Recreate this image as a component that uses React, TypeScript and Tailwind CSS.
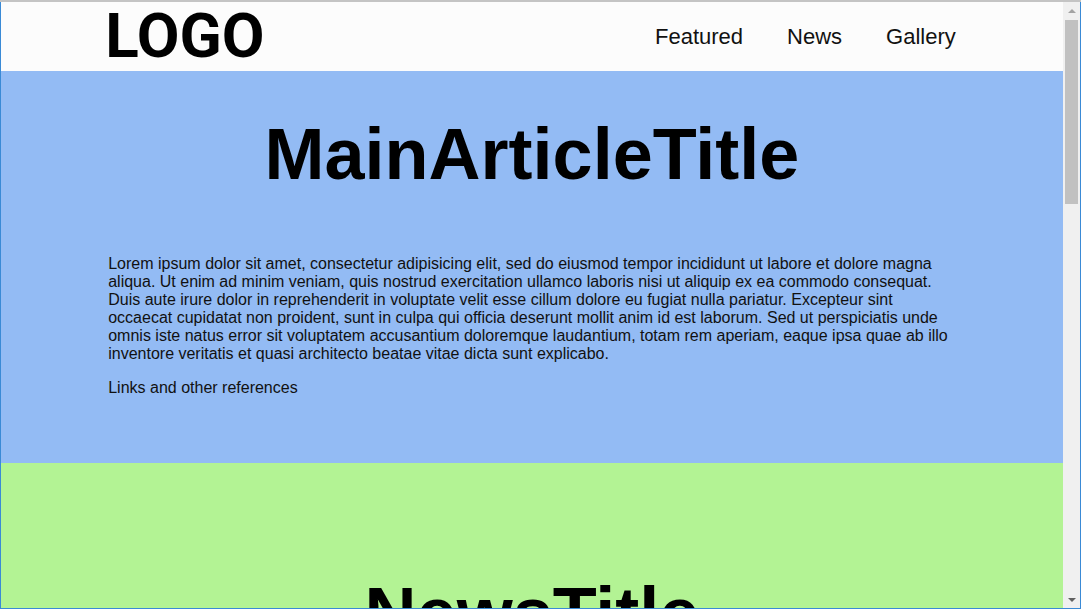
const lorem =
  "Lorem ipsum dolor sit amet, consectetur adipisicing elit, sed do eiusmod tempor incididunt ut labore et dolore magna aliqua. Ut enim ad minim veniam, quis nostrud exercitation ullamco laboris nisi ut aliquip ex ea commodo consequat. Duis aute irure dolor in reprehenderit in voluptate velit esse cillum dolore eu fugiat nulla pariatur. Excepteur sint occaecat cupidatat non proident, sunt in culpa qui officia deserunt mollit anim id est laborum. Sed ut perspiciatis unde omnis iste natus error sit voluptatem accusantium doloremque laudantium, totam rem aperiam, eaque ipsa quae ab illo inventore veritatis et quasi architecto beatae vitae dicta sunt explicabo.";

const navLinks = ["Featured", "News", "Gallery"];

function Scrollbar() {
  return (
    <div className="w-[17px] shrink-0 bg-[#f0f0f0] flex flex-col items-center">
      {/* up arrow */}
      <div className="h-[17px] w-full flex items-center justify-center">
        <div className="w-0 h-0 border-l-[4px] border-r-[4px] border-b-[4px] border-l-transparent border-r-transparent border-b-[#a3a3a3]" />
      </div>
      {/* thumb */}
      <div className="w-[13px] h-[184px] mt-[1px] bg-[#c1c1c1]" />
      <div className="flex-1" />
      {/* down arrow */}
      <div className="h-[17px] w-full flex items-center justify-center">
        <div className="w-0 h-0 border-l-[4px] border-r-[4px] border-t-[4px] border-l-transparent border-r-transparent border-t-[#606060]" />
      </div>
    </div>
  );
}

export default function App() {
  return (
    <div
      className="w-[1081px] h-[609px] flex flex-col overflow-hidden bg-white"
      style={{ fontFamily: "'Liberation Sans', Arial, sans-serif" }}
    >
      {/* window top edge */}
      <div className="h-[2px] shrink-0 bg-[#c4c4c4]" />

      <div className="flex-1 flex min-h-0">
        <div className="w-px shrink-0 bg-[#3a8ad6]" />

        {/* page */}
        <div className="flex-1 min-w-0 flex flex-col overflow-hidden">
          {/* header */}
          <header className="h-[69px] shrink-0 bg-[#fcfcfc]">
            <div className="w-[80%] h-full mx-auto flex items-center justify-between">
              <div
                className="text-[62px] font-bold leading-[66px] text-black -ml-[2px] -mt-[2px]"
                style={{ fontFamily: "Roboto, sans-serif" }}
              >
                LOGO
              </div>
              <nav className="flex items-center gap-[44px] pr-px text-[22px] text-[#111]">
                {navLinks.map((l) => (
                  <a key={l} className="leading-[26px]">
                    {l}
                  </a>
                ))}
              </nav>
            </div>
          </header>

          {/* main article */}
          <section className="h-[392px] shrink-0 bg-[#93bbf4] pt-[47px]">
            <h1 className="text-[72px] font-bold leading-none text-center text-black">
              MainArticleTitle
            </h1>
            <div className="w-[80%] mx-auto mt-[65px] pl-px text-[16px] leading-[18px] text-[#111]">
              <p>{lorem}</p>
              <p className="mt-4">Links and other references</p>
            </div>
          </section>

          {/* news */}
          <section className="flex-1 bg-[#b3f394] pt-[114px]">
            <h1 className="text-[72px] font-bold leading-none text-center text-black">
              NewsTitle
            </h1>
          </section>
        </div>

        <Scrollbar />
        <div className="w-px shrink-0 bg-[#3a8ad6]" />
      </div>

      <div className="h-px shrink-0 bg-[#3a8ad6]" />
    </div>
  );
}
